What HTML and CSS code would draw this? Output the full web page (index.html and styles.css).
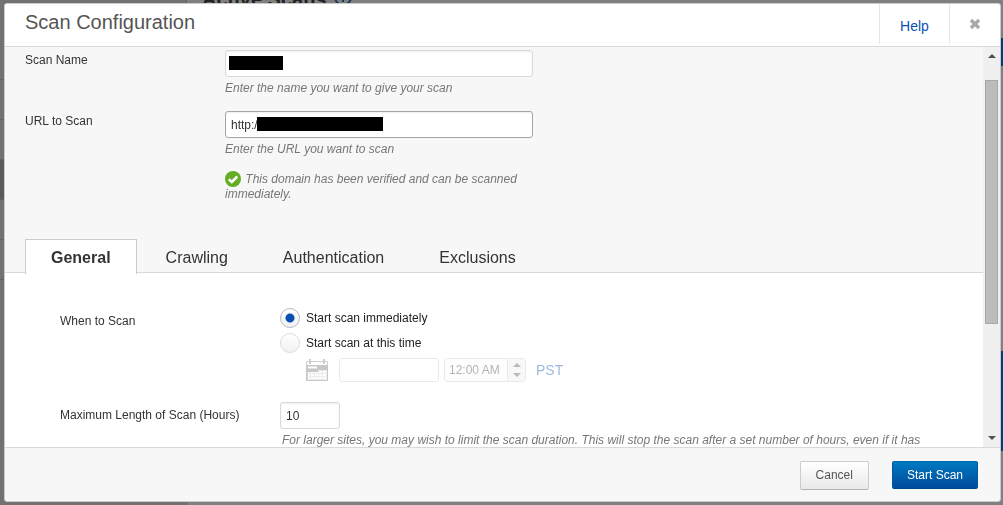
FILE: index.html
```html
<!DOCTYPE html>
<html lang="en">
<head>
  <meta charset="UTF-8" />
  <meta name="viewport" content="width=device-width, initial-scale=1.0"/>
  <title>Scan Configuration</title>
  <link rel="stylesheet" href="styles.css">
</head>
<body>
  <div class="page" aria-hidden="true">
    <div class="page-nav">
      <span></span><span></span><span></span><span class="current"></span><span></span><span></span>
    </div>
    <div class="page-main">
      <div class="page-title">Active Scans
        <svg width="18" height="18" viewBox="0 0 18 18"><circle cx="9" cy="9" r="8" fill="none" stroke="#1d3a5c" stroke-width="2"/><path d="M6 7a3 3 0 1 1 4 3l-1 1v3" fill="none" stroke="#1d3a5c" stroke-width="2"/></svg>
      </div>
      <div class="page-button"></div>
      <div class="page-panel"></div>
    </div>
  </div>

  <div class="modal" role="dialog" aria-labelledby="modalTitle">
    <header class="modal-header">
      <h1 id="modalTitle">Scan Configuration</h1>
      <div class="header-cell help"><a href="#help">Help</a></div>
      <div class="header-cell close">
        <button type="button" class="close-btn" aria-label="Close">
          <svg width="12" height="12" viewBox="0 0 12 12"><path d="M2 2l8 8M10 2l-8 8" stroke="#a9a9a9" stroke-width="3.400"/></svg>
        </button>
      </div>
    </header>

    <div class="modal-body">
      <form id="scanForm" class="content">
        <div class="basics">
          <div class="row">
            <label for="scanName">Scan Name</label>
            <div class="field">
              <div class="masked">
                <input type="text" id="scanName" class="text-input">
                <span class="mask mask-name"></span>
              </div>
              <p class="hint">Enter the name you want to give your scan</p>
            </div>
          </div>
          <div class="row">
            <label for="scanUrl">URL to Scan</label>
            <div class="field">
              <div class="masked">
                <input type="text" id="scanUrl" class="text-input active" value="http:/">
                <span class="mask mask-url"></span>
              </div>
              <p class="hint">Enter the URL you want to scan</p>
              <p class="hint verified"><svg width="16" height="16" viewBox="0 0 16 16"><circle cx="8" cy="8" r="8" fill="#64ad22"/><path d="M3.800 8.200l3 2.800 5.500-5.500" fill="none" stroke="#fff" stroke-width="2.600"/></svg> This domain has been verified and can be scanned immediately.</p>
            </div>
          </div>
        </div>

        <div class="tabs" role="tablist">
          <button type="button" role="tab" class="tab selected" aria-selected="true">General</button>
          <button type="button" role="tab" class="tab">Crawling</button>
          <button type="button" role="tab" class="tab">Authentication</button>
          <button type="button" role="tab" class="tab">Exclusions</button>
        </div>

        <div class="panel" role="tabpanel">
          <div class="row">
            <span class="row-label" id="whenLabel">When to Scan</span>
            <div class="when" role="radiogroup" aria-labelledby="whenLabel">
              <label class="option"><input type="radio" name="when" checked>Start scan immediately</label>
              <label class="option"><input type="radio" name="when" class="muted">Start scan at this time</label>
              <div class="schedule">
                <svg class="calendar" width="22" height="22" viewBox="0 0 22 22">
                  <path d="M.5 6V2.500h21V6" fill="none" stroke="#888"/>
                  <path d="M4 0v5M18 0v5" stroke="#888" stroke-width="2"/>
                  <path d="M0 6h22v16H0z" fill="#777"/>
                  <path d="M2 8.500h9" stroke="#fff" stroke-width="2"/>
                  <path d="M13 11.500h8M1 14.500h20M1 17.500h20M1 20.500h20M4.500 13v8M8.500 13v8M12.500 11v10M16.500 11v10M20.500 11v10" stroke="#fff" stroke-opacity=".6"/>
                  <path d="M2 13h2v1H2zM5 13h3v1H5zM9 13h3v1H9zM2 15h2v2H2zM5 15h3v2H5zM9 15h3v2H9zM13 15h3v2h-3zM17 15h3v2h-3zM2 18h2v2H2zM5 18h3v2H5zM9 18h3v2H9zM13 18h3v2h-3zM17 18h3v2h-3zM13 12h3v2h-3zM17 12h3v2h-3z" fill="#fff"/>
                </svg>
                <input type="text" class="date-input" aria-label="Start date" disabled>
                <div class="time-box">
                  <input type="text" aria-label="Start time" value="12:00 AM" disabled>
                  <div class="spinner">
                    <button type="button" class="up" aria-label="Later" disabled></button>
                    <button type="button" class="down" aria-label="Earlier" disabled></button>
                  </div>
                </div>
                <a href="#timezone">PST</a>
              </div>
            </div>
          </div>
          <div class="row">
            <label for="maxLength">Maximum Length of Scan (Hours)</label>
            <div class="length">
              <input type="text" id="maxLength" class="text-input short" value="10">
              <p class="hint">For larger sites, you may wish to limit the scan duration. This will stop the scan after a set number of hours, even if it has</p>
            </div>
          </div>
        </div>
      </form>

      <div class="scrollbar" aria-hidden="true">
        <svg width="8" height="4" viewBox="0 0 8 4"><path d="M0 4l4-4 4 4z" fill="#505050"/></svg>
        <div class="track"><div class="thumb"></div></div>
        <svg width="8" height="4" viewBox="0 0 8 4"><path d="M0 0l4 4 4-4z" fill="#505050"/></svg>
      </div>
    </div>

    <footer class="modal-footer">
      <button type="button" class="btn">Cancel</button>
      <button type="submit" form="scanForm" class="btn primary">Start Scan</button>
    </footer>
  </div>
</body>
</html>
```

FILE: styles.css
```css
:root {
  --grey-bg: #f7f7f7;
  --line: #d9d9d9;
  --text: #333;
  --hint: #777;
  --blue: #0a50b4;
}

* {
  box-sizing: border-box;
}

body {
  margin: 0;
  height: 100vh;
  overflow: hidden;
  font-family: "Liberation Sans", Arial, sans-serif;
  font-size: 12px;
  line-height: 15px;
  color: var(--text);
}

h1, p {
  margin: 0;
}

button, input {
  font: inherit;
  color: inherit;
}

a {
  color: var(--blue);
  text-decoration: none;
}

/* dimmed page behind the dialog */
.page {
  display: flex;
  height: 100vh;
  background: #7f7f7f;
}

.page-nav {
  width: 187px;
  padding-top: 40px;
  background: #747271;
  border-right: 1px solid #686868;
}

.page-nav span {
  display: block;
  height: 40px;
  border-bottom: 1px solid #636261;
}

.page-nav .current {
  background: #5c5b5a;
}

.page-main {
  flex: 1;
  display: flex;
  flex-direction: column;
  align-items: flex-end;
}

.page-title {
  align-self: stretch;
  height: 38px;
  margin-top: -12px;
  padding-left: 15px;
  font-size: 20px;
  line-height: 22px;
  font-weight: bold;
  color: #222;
}

.page-title svg {
  margin-left: 2px;
  vertical-align: top;
}

.page-button {
  width: 100px;
  height: 28px;
  margin-top: 12px;
  background: #00407a;
}

.page-panel {
  width: 100px;
  height: 100px;
  margin-top: 285px;
  background: #00407a;
}

/* dialog */
.modal {
  position: fixed;
  inset: 3px 2px 3px 4px;
  display: flex;
  flex-direction: column;
  overflow: hidden;
  background: var(--grey-bg);
  border: 1px solid #ccc;
  border-radius: 3px;
}

.modal-header {
  flex: none;
  display: flex;
  height: 43px;
  padding-left: 20px;
  background: #fff;
  border-bottom: 1px solid var(--line);
}

.modal-header h1 {
  flex: 1;
  font-size: 20px;
  line-height: 36px;
  font-weight: normal;
  color: #555;
}

.header-cell {
  display: flex;
  align-items: center;
  justify-content: center;
  height: 40px;
  border-left: 1px solid #e5e5e5;
}

.help {
  width: 70px;
  padding-top: 4px;
  font-size: 14px;
}

.close {
  width: 51px;
}

.close-btn {
  display: flex;
  padding: 0;
  border: none;
  background: none;
  cursor: pointer;
}

.modal-body {
  flex: 1;
  min-height: 0;
  display: flex;
}

.content {
  flex: 1;
  overflow: hidden;
}

.row {
  display: flex;
}

.basics {
  padding: 3px 20px 0;
}

.basics .row {
  margin-bottom: 15px;
}

.basics .row > label {
  width: 200px;
  padding-top: 3px;
}

.field {
  width: 308px;
}

.masked {
  position: relative;
}

.text-input {
  display: block;
  width: 100%;
  height: 27px;
  padding: 0 5px;
  background: #fff;
  border: 1px solid var(--line);
  border-radius: 3px;
  box-shadow: inset 0 1px 2px #eee;
}

.text-input.active {
  border-color: #a5a5a5;
}

.mask {
  position: absolute;
  top: 6px;
  height: 14px;
  background: #000;
}

.mask-name {
  left: 4px;
  width: 54px;
}

.mask-url {
  left: 32px;
  width: 126px;
}

.hint {
  margin-top: 4px;
  font-style: italic;
  color: var(--hint);
}

.verified {
  margin-top: 14px;
}

.verified svg {
  margin: 0 1px -1px 0;
  vertical-align: text-bottom;
}

/* tabs */
.tabs {
  display: flex;
  gap: 3px;
  height: 34px;
  margin-top: 37px;
  padding: 0 20px;
  border-bottom: 1px solid var(--line);
}

.tab {
  height: 35px;
  padding: 0 25px;
  border: 1px solid transparent;
  border-bottom: none;
  background: none;
  font-size: 16px;
  cursor: pointer;
}

.tab.selected {
  background: #fff;
  border-color: #ccc;
  font-weight: bold;
}

.panel {
  padding: 35px 55px 20px;
  background: #fff;
}

.panel .row {
  margin-bottom: 20px;
}

.row-label,
.panel .row > label {
  flex: none;
  width: 220px;
  padding-top: 6px;
}

.when {
  display: flex;
  flex-direction: column;
  gap: 5px;
}

.option {
  display: flex;
  align-items: center;
  gap: 6px;
  height: 20px;
  color: #222;
}

.option input {
  appearance: none;
  width: 20px;
  height: 20px;
  margin: 0;
  border: 1px solid #b4bcc6;
  border-radius: 50%;
  background: linear-gradient(#fff, #f1f1f1);
}

.option input:checked {
  background: radial-gradient(circle, var(--blue) 4px, transparent 5px), linear-gradient(#fff, #f1f1f1);
}

.option .muted {
  border-color: #ddd;
}

.schedule {
  display: flex;
  align-items: center;
  height: 24px;
  margin-left: 26px;
  opacity: 0.4;
}

.calendar {
  margin-right: 11px;
}

.date-input,
.time-box {
  height: 24px;
  background: #fff;
  border: 1px solid #ccc;
  border-radius: 3px;
}

.date-input {
  width: 100px;
  margin-right: 5px;
}

.time-box {
  display: flex;
  width: 82px;
  margin-right: 10px;
  overflow: hidden;
}

.time-box input {
  flex: 1;
  min-width: 0;
  padding: 0 4px;
  border: none;
  background: #fbfbfb;
  color: #444;
}

.spinner {
  display: flex;
  flex-direction: column;
  align-items: center;
  justify-content: center;
  gap: 6px;
  width: 18px;
  background: #eee;
  border-left: 1px solid #ccc;
}

.spinner button {
  width: 0;
  height: 0;
  padding: 0;
  border: 4px solid transparent;
  background: none;
}

.spinner .up {
  border-top: none;
  border-bottom-color: #555;
}

.spinner .down {
  border-bottom: none;
  border-top-color: #555;
}

.schedule a {
  font-size: 14px;
}

.text-input.short {
  width: 60px;
}

.length .hint {
  margin-left: 2px;
}

/* scrollbar column */
.scrollbar {
  flex: none;
  display: flex;
  flex-direction: column;
  align-items: center;
  width: 17px;
  padding: 7px 0;
  background: #f0f0f0;
}

.scrollbar svg {
  flex: none;
}

.track {
  flex: 1;
  padding: 22px 0 112px;
}

.thumb {
  width: 13px;
  height: 100%;
  background: #bcbcbc;
  border: 1px solid #a8a8a8;
}

.modal-footer {
  flex: none;
  display: flex;
  gap: 23px;
  justify-content: flex-end;
  height: 54px;
  padding: 13px 22px 0 0;
  border-top: 1px solid var(--line);
}

.btn {
  height: 29px;
  padding: 0 15px;
  background: linear-gradient(#fff, #e9e9e9);
  border: 1px solid #ccc;
  border-bottom-color: #b3b3b3;
  border-radius: 2px;
  color: #555;
  cursor: pointer;
}

.btn.primary {
  height: 28px;
  padding: 0 14px;
  background: linear-gradient(#0079c1, #004b9b);
  border-color: #0069b0 #00579f #004488;
  color: #fff;
}
```
